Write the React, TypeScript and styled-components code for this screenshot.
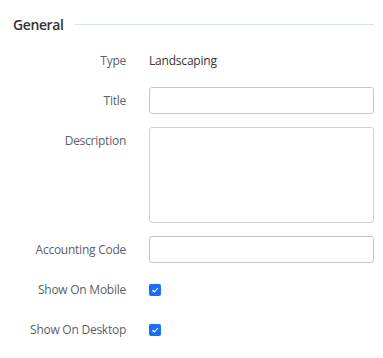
import styled, { createGlobalStyle } from "styled-components";

const GlobalStyle = createGlobalStyle`
  body {
    margin: 0;
    background: #fff;
    font-family: "Open Sans", "Noto Sans", sans-serif;
  }
`;

const Wrapper = styled.div`
  width: 383px;
  padding: 12px 9px 0 13px;
  box-sizing: border-box;
`;

const SectionHeader = styled.div`
  display: flex;
  align-items: center;
  gap: 12px;
  height: 24px;
  margin-bottom: 11px;

  > h2 {
    margin: 0;
    font-size: 14px;
    font-weight: 600;
    letter-spacing: -0.4px;
    color: #333;
  }

  > span {
    flex: 1;
    height: 1px;
    background: #d3e3f7;
  }
`;

const Form = styled.div`
  display: grid;
  grid-template-columns: 113px 1fr;
  column-gap: 23px;
  row-gap: 13px;
`;

const Label = styled.label`
  font-size: 12px;
  line-height: 27px;
  letter-spacing: -0.25px;
  color: #5b6168;
  text-align: right;
  white-space: nowrap;
`;

const Value = styled.div`
  font-size: 12px;
  line-height: 27px;
  letter-spacing: -0.2px;
  color: #333;
`;

const Input = styled.input`
  height: 27px;
  box-sizing: border-box;
  border: 1px solid #c6c6c6;
  border-radius: 3px;
  font: inherit;
  font-size: 12px;
  padding: 0 8px;
  outline: none;
`;

const TextArea = styled.textarea`
  height: 96px;
  box-sizing: border-box;
  border: 1px solid #d0d0d0;
  border-radius: 3px;
  font: inherit;
  font-size: 12px;
  padding: 6px 8px;
  resize: none;
  outline: none;
`;

const CheckCell = styled.div`
  display: flex;
  align-items: center;
  height: 27px;
  padding-top: 1px;
  box-sizing: border-box;
`;

const Check = styled.span`
  width: 12px;
  height: 12px;
  border-radius: 2px;
  background: #1a6ef5;
  display: flex;
  align-items: center;
  justify-content: center;
`;

const Checkbox = () => (
  <CheckCell>
    <Check>
      <svg width="8" height="8" viewBox="0 0 8 8">
        <path d="M1.3 4.2 L3.2 5.9 L6.8 2.2" fill="none" stroke="#fff" strokeWidth="1.2" />
      </svg>
    </Check>
  </CheckCell>
);

export default function App() {
  return (
    <Wrapper>
      <GlobalStyle />
      <SectionHeader>
        <h2>General</h2>
        <span />
      </SectionHeader>
      <Form>
        <Label>Type</Label>
        <Value>Landscaping</Value>
        <Label>Title</Label>
        <Input type="text" />
        <Label>Description</Label>
        <TextArea />
        <Label>Accounting Code</Label>
        <Input type="text" />
        <Label>Show On Mobile</Label>
        <Checkbox />
        <Label>Show On Desktop</Label>
        <Checkbox />
      </Form>
    </Wrapper>
  );
}
